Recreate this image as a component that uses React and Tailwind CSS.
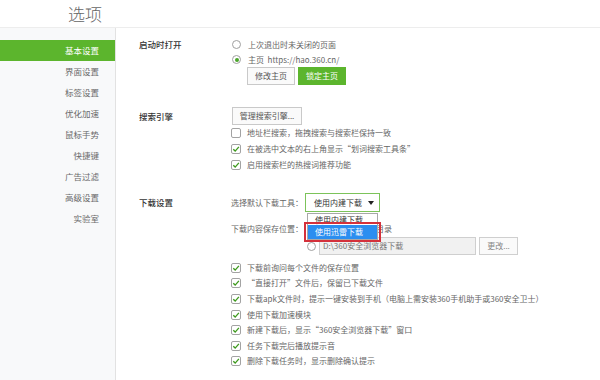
import React from 'react';

const navItems = ['基本设置', '界面设置', '标签设置', '优化加速', '鼠标手势', '快捷键', '广告过滤', '高级设置', '实验室'];

const Check = ({ checked = true }) => (
  <span className="w-[10px] h-[10px] border border-[#a3a3a3] rounded-[2px] bg-white flex items-center justify-center shrink-0">
    {checked && (
      <svg viewBox="0 0 10 10" className="w-[8px] h-[8px]">
        <path d="M1.6 5.2 L4 7.6 L8.6 2.4" stroke="#3e9a1e" strokeWidth="1.7" fill="none" />
      </svg>
    )}
  </span>
);

const Radio = ({ checked = false }) => (
  <span className="w-[9px] h-[9px] rounded-full border border-[#a0a0a0] bg-white flex items-center justify-center shrink-0">
    {checked && <span className="w-[4px] h-[4px] rounded-full bg-[#4aa52a]" />}
  </span>
);

const CheckRow = ({ text, checked = true, h = 'h-[16px]' }) => (
  <div className={`${h} flex items-center gap-[6px]`}>
    <Check checked={checked} />
    <span className="text-[8px] text-[#666] whitespace-nowrap">{text}</span>
  </div>
);

export default function App() {
  return (
    <div className="w-[600px] h-[380px] bg-white overflow-hidden font-['Noto_Sans_CJK_SC',sans-serif]">
      {/* header */}
      <div className="h-[28px] border-b border-[#ededed] flex items-center pl-[68px]">
        <span className="text-[17px] leading-none font-light text-[#666]">选项</span>
      </div>

      <div className="flex h-[352px]">
        {/* sidebar */}
        <aside className="w-[116px] shrink-0 bg-[#f8f9fa] border-r border-[#e2e2e2] pt-[12px]">
          {navItems.map((item, i) => (
            <div
              key={item}
              className={`h-[21px] flex items-center justify-end pr-[16px] text-[8.5px] ${
                i === 0 ? 'bg-[#5cb52d] text-white' : 'text-[#6a6a6a]'
              }`}
            >
              {item}
            </div>
          ))}
        </aside>

        {/* content */}
        <main className="flex-1 pl-[23px] pt-[9px]">
          {/* 启动时打开 */}
          <section className="flex">
            <div className="w-[92px] h-[15px] flex items-center text-[8.5px] font-medium text-[#333]">启动时打开</div>
            <div>
              <div className="h-[15px] flex items-center gap-[7px] pl-[1px]">
                <Radio />
                <span className="text-[8px] text-[#666]">上次退出时未关闭的页面</span>
              </div>
              <div className="h-[15px] flex items-center gap-[7px] pl-[1px]">
                <Radio checked />
                <span className="text-[8px] text-[#666] whitespace-pre">主页  https://hao.360.cn/</span>
              </div>
              <div className="flex gap-[3px] pl-[16px]">
                <button className="w-[48px] h-[18px] border border-[#c9c9c9] bg-[#fafafa] text-[8px] text-[#555]">修改主页</button>
                <button className="w-[48px] h-[18px] bg-[#5cb52d] text-[8px] text-white">锁定主页</button>
              </div>
            </div>
          </section>

          {/* 搜索引擎 */}
          <section className="flex mt-[22px]">
            <div className="w-[92px] h-[18px] flex items-center text-[8.5px] font-medium text-[#333]">搜索引擎</div>
            <div>
              <button className="block w-[70px] h-[18px] border border-[#c9c9c9] bg-[#fafafa] text-[8px] text-[#555] ml-[1px]">管理搜索引擎...</button>
              <CheckRow text="地址栏搜索，拖拽搜索与搜索栏保持一致" checked={false} />
              <CheckRow text="在被选中文本的右上角显示“划词搜索工具条”" />
              <CheckRow text="启用搜索栏的热搜词推荐功能" />
            </div>
          </section>

          {/* 下载设置 */}
          <section className="flex mt-[20px]">
            <div className="w-[92px] h-[19px] flex items-center text-[8.5px] font-medium text-[#333]">下载设置</div>
            <div>
              <div className="h-[19px] flex items-center">
                <span className="text-[8px] text-[#666] w-[74px]">选择默认下载工具：</span>
                <div className="relative w-[75px] h-[19px] border border-[#7cc35a] bg-white flex items-center pl-[8px]">
                  <span className="text-[8px] text-[#333]">使用内建下载</span>
                  <span className="ml-auto mr-[5px] w-0 h-0 border-l-[3px] border-r-[3px] border-t-[4px] border-l-transparent border-r-transparent border-t-[#222]" />

                  {/* open list */}
                  <div className="absolute left-[1px] top-[19px] w-[71px] border border-[#a8a8a8] bg-white z-10">
                    <div className="h-[11px] flex items-center pl-[7px] text-[8px] text-[#333]">使用内建下载</div>
                    <div className="h-[14px] flex items-center pl-[7px] text-[8px] text-white bg-[#2b8ef0]">使用迅雷下载</div>
                  </div>
                  {/* red annotation */}
                  <div className="absolute left-[-2px] top-[28px] w-[77px] h-[20px] border-2 border-[#d4313b] z-20" />
                </div>
              </div>

              <div className="flex mt-[9px]">
                <span className="text-[8px] text-[#666] w-[76px] h-[16px] flex items-center">下载内容保存位置：</span>
                <div>
                  <div className="h-[16px] flex items-center gap-[4px]">
                    <Radio />
                    <span className="text-[8px] text-[#666]">使用上次的保存目录</span>
                  </div>
                  <div className="h-[18px] flex items-center gap-[3px]">
                    <Radio />
                    <div className="w-[157px] h-[18px] border border-[#cfcfcf] bg-[#f1f1f1] flex items-center pl-[3px] text-[8px] text-[#777]">D:\360安全浏览器下载</div>
                    <button className="w-[39px] h-[18px] border border-[#cfcfcf] bg-[#fafafa] text-[8px] text-[#888]">更改...</button>
                  </div>
                </div>
              </div>

              <div className="mt-[5px]">
                <CheckRow h="h-[15.6px]" text="下载前询问每个文件的保存位置" />
                <CheckRow h="h-[15.6px]" text="“直接打开”文件后，保留已下载文件" />
                <CheckRow h="h-[15.6px]" text="下载apk文件时，提示一键安装到手机（电脑上需安装360手机助手或360安全卫士）" />
                <CheckRow h="h-[15.6px]" text="使用下载加速模块" />
                <CheckRow h="h-[15.6px]" text="新建下载后，显示“360安全浏览器下载”窗口" />
                <CheckRow h="h-[15.6px]" text="任务下载完后播放提示音" />
                <CheckRow h="h-[15.6px]" text="删除下载任务时，显示删除确认提示" />
              </div>
            </div>
          </section>
        </main>
      </div>
    </div>
  );
}
